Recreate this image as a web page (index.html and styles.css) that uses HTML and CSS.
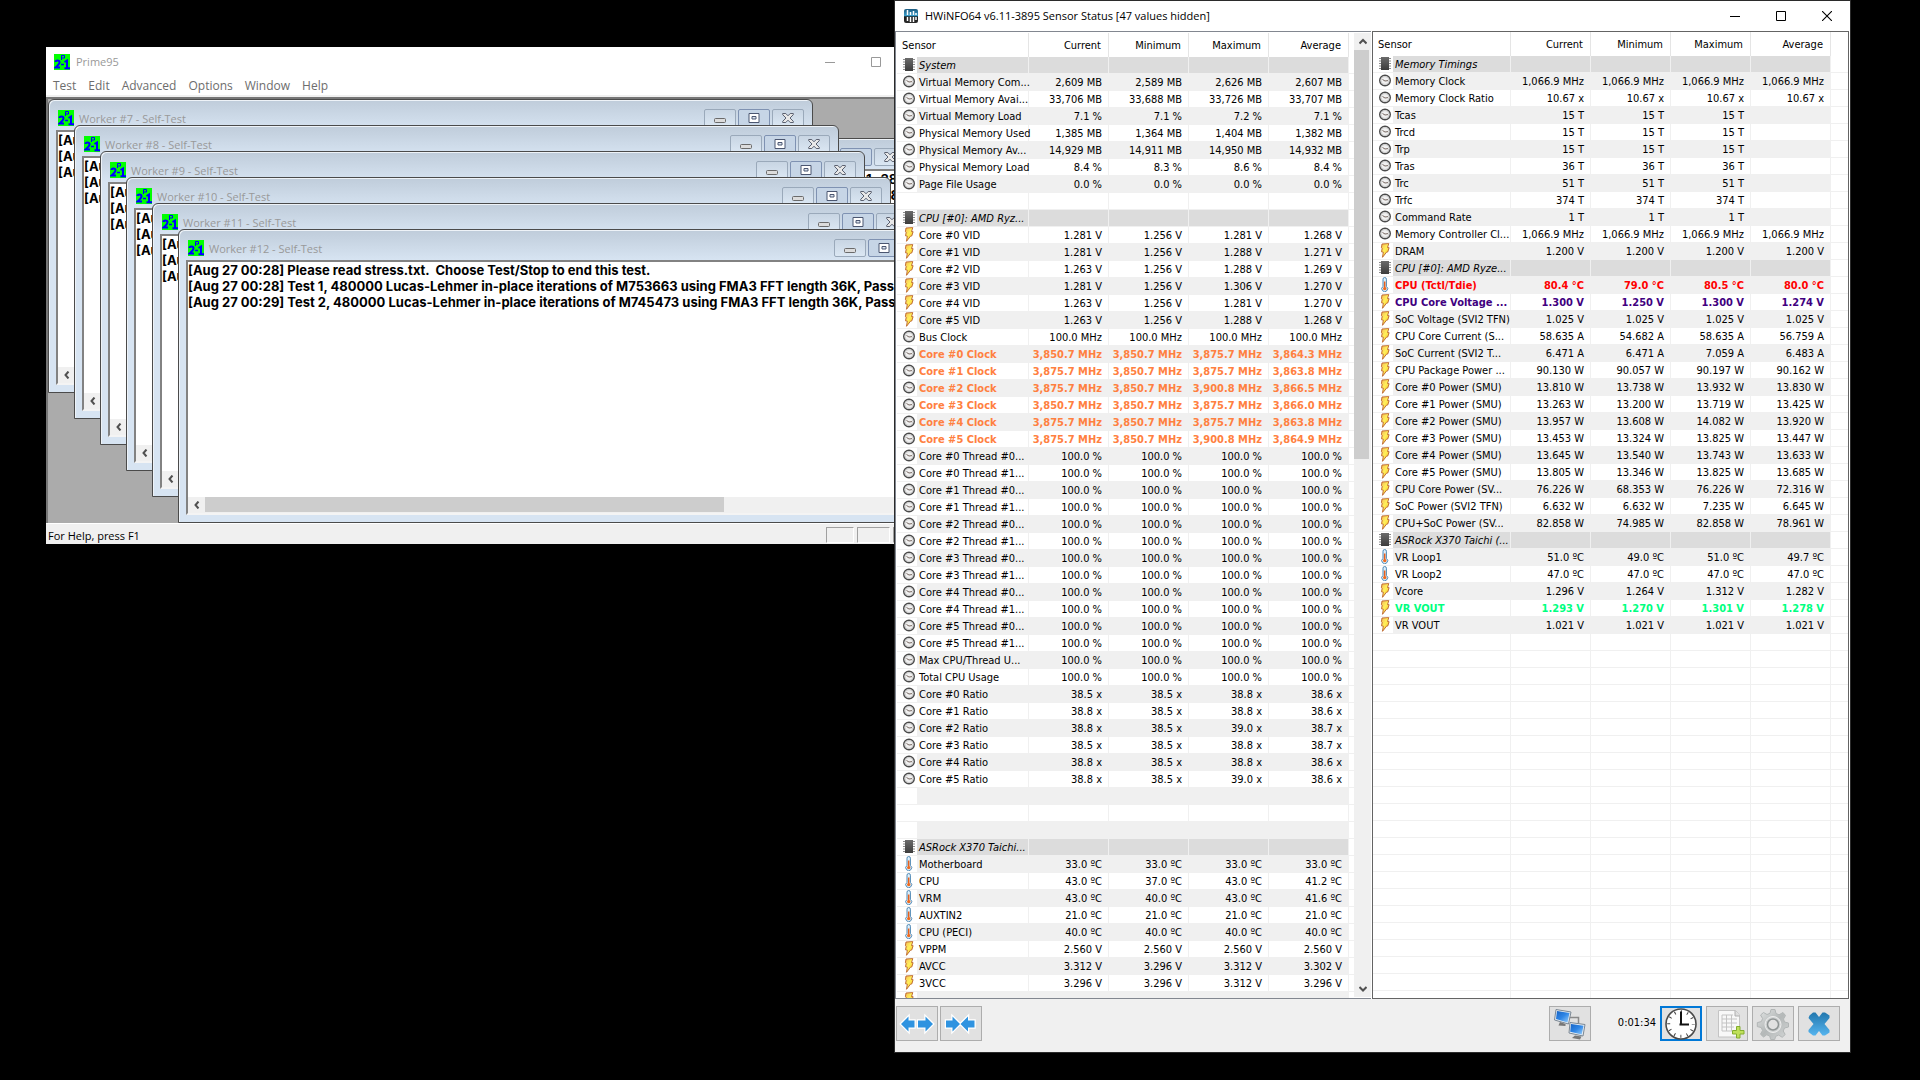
FILE: index.html
```html
<!DOCTYPE html>
<html lang="en">
<head>
<meta charset="utf-8">
<title>Desktop</title>
<link rel="stylesheet" href="styles.css">
</head>
<body>
<svg class="defs" aria-hidden="true">
  <defs>
    <linearGradient id="g-chip" x1="0" y1="0" x2="0" y2="1"><stop offset="0" stop-color="#6b6b6b"/><stop offset="1" stop-color="#3c3c3c"/></linearGradient>
    <linearGradient id="g-bolt" x1="0" y1="0" x2="1" y2="1"><stop offset="0" stop-color="#f6b95a"/><stop offset=".45" stop-color="#fff05a"/><stop offset="1" stop-color="#f3b31c"/></linearGradient>
    <linearGradient id="g-blue" x1="0" y1="0" x2="0" y2="1"><stop offset="0" stop-color="#2277ae"/><stop offset="1" stop-color="#55b4ee"/></linearGradient>
    <linearGradient id="g-screen" x1="0" y1="0" x2="1" y2="1"><stop offset="0" stop-color="#1763c4"/><stop offset=".5" stop-color="#2f86e6"/><stop offset="1" stop-color="#9bd0fa"/></linearGradient>
    <linearGradient id="g-steel" x1="0" y1="0" x2="1" y2="1"><stop offset="0" stop-color="#e4e6e6"/><stop offset=".5" stop-color="#b4b8b8"/><stop offset="1" stop-color="#d5d8d8"/></linearGradient>
    <linearGradient id="g-app" x1="0" y1="0" x2="0" y2="1"><stop offset="0" stop-color="#1d5b80"/><stop offset=".5" stop-color="#3a9fcc"/><stop offset=".55" stop-color="#1c1c1c"/><stop offset="1" stop-color="#2c2c2c"/></linearGradient>
  </defs>
  <symbol id="chip" viewBox="0 0 12 15">
    <path d="M0 2.500h12M0 5h12M0 7.500h12M0 10h12M0 12.500h12" stroke="#8a8a8a"/>
    <rect x="2" y="1" width="8" height="13" fill="url(#g-chip)"/>
  </symbol>
  <symbol id="clock" viewBox="0 0 12 15">
    <circle cx="6" cy="7.500" r="5.300" fill="#f1f1f1" stroke="#4a4a4a" stroke-width="1.400"/>
    <circle cx="6" cy="7.500" r="4" fill="none" stroke="#c4c4c4" stroke-width=".8"/>
    <path d="M3.500 6.500 6 8l3-.4" fill="none" stroke="#6b5a52" stroke-width=".9"/>
  </symbol>
  <symbol id="bolt" viewBox="0 0 12 15">
    <path d="M3 1 9.800.6 8.500 4.500l1.600.2-1.300 4.200-1.300.3L3.500 14.300l.8-5.200-1.800-.3.700-3.500-.8-.6z" fill="url(#g-bolt)" stroke="#b9602a" stroke-width=".9" stroke-linejoin="round"/>
  </symbol>
  <symbol id="therm" viewBox="0 0 12 15">
    <path d="M4 2.200a1.700 1.700 0 0 1 3.400 0v7.200a2.900 2.900 0 1 1-3.400 0z" fill="#dff0fb" stroke="#4f88b5" stroke-width="1"/>
    <path d="M5.700 4.500v7" stroke="#e8601c" stroke-width="1.500"/>
    <circle cx="5.700" cy="11.600" r="1.700" fill="#ef6a1e"/>
  </symbol>
  <symbol id="p95" viewBox="0 0 16 16">
    <path fill="#0f0" d="M0 0h16v16H0z"/>
    <path d="M7.500 6V1.500h3v2.500h-3" fill="none" stroke="#00f" stroke-width="1"/>
    <path d="M1.500 8q0-1.500 2-1.500T5.500 8.200Q5.500 10 1.500 13.500H6" fill="none" stroke="#00f" stroke-width="2"/>
    <path d="M7 10.500h3" stroke="#00f" stroke-width="1.500"/>
    <path d="M10.500 8 13 6.500v7M10.500 14.200H16" fill="none" stroke="#00f" stroke-width="2"/>
  </symbol>
  <symbol id="chev-left" viewBox="0 0 8 8"><path d="M5.500 0.500 2.500 4l3 3.500" fill="none" stroke="#505050" stroke-width="2"/></symbol>
  <symbol id="chev-up" viewBox="0 0 8 8"><path d="m.5 5.500 3.500-3.500 3.500 3.500" fill="none" stroke="#505050" stroke-width="2"/></symbol>
  <symbol id="chev-down" viewBox="0 0 8 8"><path d="m.5 2 3.500 3.500 3.500-3.500" fill="none" stroke="#505050" stroke-width="2"/></symbol>
  <symbol id="win-min" viewBox="0 0 10 10"><path d="M0 5.500h10" stroke="currentColor"/></symbol>
  <symbol id="win-max" viewBox="0 0 10 10"><path d="M.5.5h9v9h-9z" fill="none" stroke="currentColor"/></symbol>
  <symbol id="win-close" viewBox="0 0 10 10"><path d="m0 0 10 10M10 0 0 10" stroke="currentColor" stroke-width="1.100"/></symbol>
  <symbol id="mdi-min" viewBox="0 0 12 10"><rect x=".5" y="5.500" width="11" height="4" rx="1" fill="#dcdcdc" stroke="#6a6a6a"/></symbol>
  <symbol id="mdi-max" viewBox="0 0 12 10"><path d="M1 .5h10v9H1z" fill="#fff" stroke="#4b5670"/><path d="M4 3.500h4v2.500H4z" fill="#dce4ef" stroke="#4b5670"/></symbol>
  <symbol id="mdi-close" viewBox="0 0 12 10"><path d="M.7.5h3.100L6 2.800 8.200.5h3.100v1.200L8 5l3.300 3.300v1.200H8.200L6 7.200 3.800 9.500H.7V8.300L4 5 .7 1.700z" fill="#e8e8e8" stroke="#5a6070"/></symbol>
</svg>

<main class="desktop">
  <section class="window prime" aria-label="Prime95">
    <header class="caption inactive">
      <svg class="app-icon"><use href="#p95"/></svg>
      <h1>Prime95</h1>
      <button aria-label="Minimize"><svg><use href="#win-min"/></svg></button>
      <button aria-label="Maximize"><svg><use href="#win-max"/></svg></button>
      <button aria-label="Close"><svg><use href="#win-close"/></svg></button>
    </header>
    <nav class="menu">
      <button>Test</button><button>Edit</button><button>Advanced</button><button>Options</button><button>Window</button><button>Help</button>
    </nav>
    <div class="mdi" id="mdi"></div>
    <footer class="status"><span class="hint">For Help, press F1</span><span class="cell cell-a"></span><span class="cell cell-b"></span><span class="cell cell-c"></span></footer>
  </section>

  <section class="window hwinfo" aria-label="HWiNFO64 Sensor Status">
    <header class="caption">
      <svg class="app-icon" viewBox="0 0 16 16"><rect x="1" y="1" width="14" height="14" rx="2" fill="url(#g-app)"/><path d="M4.500 2v5M7.500 4v3M10.500 3v4M13 5v2M4.500 9v4M7.500 9v5M10.500 9v5M13 9v3" stroke="#fff" stroke-width="1.500"/></svg>
      <h1>HWiNFO64 v6.11-3895 Sensor Status [47 values hidden]</h1>
      <button aria-label="Minimize"><svg><use href="#win-min"/></svg></button>
      <button aria-label="Maximize"><svg><use href="#win-max"/></svg></button>
      <button aria-label="Close"><svg><use href="#win-close"/></svg></button>
    </header>
    <div class="panes">
      <div class="pane pane-left">
        <table class="sensors">
          <colgroup><col class="c-name"><col class="c-val"><col class="c-val"><col class="c-val"><col class="c-val"><col></colgroup>
          <thead><tr><th>Sensor</th><th>Current</th><th>Minimum</th><th>Maximum</th><th>Average</th><th></th></tr></thead>
          <tbody id="left"></tbody>
        </table>
        <div class="vscroll">
          <button aria-label="Scroll up"><svg><use href="#chev-up"/></svg></button>
          <div class="track"><div class="thumb"></div></div>
          <button aria-label="Scroll down"><svg><use href="#chev-down"/></svg></button>
        </div>
      </div>
      <div class="pane pane-right">
        <table class="sensors">
          <colgroup><col class="c-name"><col class="c-val"><col class="c-val"><col class="c-val"><col class="c-val"><col></colgroup>
          <thead><tr><th>Sensor</th><th>Current</th><th>Minimum</th><th>Maximum</th><th>Average</th><th></th></tr></thead>
          <tbody id="right"></tbody>
        </table>
      </div>
    </div>
    <footer class="tools">
      <div class="pair">
        <button aria-label="Expand columns"><svg viewBox="0 0 36 20"><path d="M2 10 9.500 2.500V6.500H15.500v7H9.500v4zM34 10l-7.500-7.500v4H19v7h7.500v4z" fill="#2f93e0" stroke="#fff" stroke-width="2.500" paint-order="stroke"/></svg></button>
        <button aria-label="Shrink columns"><svg viewBox="0 0 36 20"><path d="M17 10l-7.500-7.500v4H3v7h6.500v4zM17.500 10 25 2.500v4h6.500v7H25v4z" fill="#2f93e0" stroke="#fff" stroke-width="2.500" paint-order="stroke"/></svg></button>
      </div>
      <button aria-label="Remote sensors"><svg viewBox="0 0 36 32"><path d="M15 9.500h11.500V17" fill="none" stroke="#8a8a8a" stroke-width="1.500"/>
        <path d="m4 1.500 15 2.500-2.500 12L2.500 12z" fill="#e8eef4" stroke="#7a8794"/><path d="M5 3l12.500 2-2 9.500L4 11z" fill="url(#g-screen)"/><path d="m8 14-1.500 3.500 7 .5v-2z" fill="#777"/>
        <path d="m18 14.500 15 2-2 11.500-14-3z" fill="#e8eef4" stroke="#7a8794"/><path d="m19 16 12.500 1.800-1.800 8.700-11.500-2.700z" fill="url(#g-screen)"/><path d="M23 27.500 20 30l8 1.500 1.500-3z" fill="#777"/></svg></button>
      <time>0:01:34</time>
      <button class="active" aria-label="Reset timer"><svg viewBox="0 0 36 32"><circle cx="18" cy="16" r="15" fill="#fff" stroke="#4a4a4a" stroke-width="1.600"/><circle cx="18" cy="16" r="12.300" fill="none" stroke="#444" stroke-width="3" stroke-dasharray="1 5.440" stroke-dashoffset=".5"/><path d="M18 16V3.500M16.500 16.500h9.500" stroke="#111" stroke-width="2"/></svg></button>
      <button aria-label="Log to file"><svg viewBox="0 0 36 32"><path d="M9.500 2.500h17l4 4.500v22h-21z" fill="#f8f8f8" stroke="#c4c4c4"/><path d="M26 2.500V8h4.500" fill="#ddd" stroke="#b0b0b0"/><path d="M13 7h11M13 11h15M13 15h15M13 19h12M13 23h10M13 7v16M17.500 7v16M22.500 7v16" fill="none" stroke="#c4c4c4"/><path d="M27.500 18.500h3.500v4h4v3.500h-4v4h-3.500v-4h-4v-3.500h4z" fill="#bfe05a" stroke="#83ad2e"/></svg></button>
      <button aria-label="Settings"><svg viewBox="0 0 36 32"><path d="m16 1.500 4 0 1 4 3 1.300L28 4.500 30.500 7.500 28.500 11l1 3 4 1v4l-4 1-1.300 3 2 3.500-3 2.800-3.500-2.200-3 1.200-1 3.200h-4l-1-3.500-3-1.200L8.500 29l-3-2.800 2-3.600-1.200-3-4-1v-4l4-1 1.300-3-2-3.600L8.500 4.500l3.500 2 3-1.200z" fill="url(#g-steel)" stroke="#b2b6b6"/><circle cx="18" cy="16.500" r="8" fill="#cfd2d2" stroke="#eee"/><circle cx="18" cy="16.500" r="5.500" fill="#e1e1e1" stroke="#8f9494" stroke-width="1.500"/></svg></button>
      <button aria-label="Close sensors"><svg viewBox="0 0 36 32"><path d="m8.500 7.500 3.500-3h2.500L18 9l3.500-4.500H24l4.500 3V10L23.500 16l5 6v2.500l-4.500 3h-2.500L18 23l-3.500 4.500H12l-4.500-3.500v-2l5-6-5-6z" fill="url(#g-blue)"/></svg></button>
    </footer>
  </section>
</main>
<script src="app.js"></script>
</body>
</html>
```
FILE: styles.css
```css
* { box-sizing: border-box; }
body { margin: 0; background: #000; color: #000; font-family: "Open Sans", "Noto Sans", sans-serif; font-size: 11px; }
button { font: inherit; color: inherit; background: none; border: 0; padding: 0; margin: 0; }
svg { display: block; flex: none; }
h1, h2 { margin: 0; flex: 1; font-size: inherit; font-weight: 400; white-space: pre; }
.defs { position: absolute; width: 0; height: 0; }
.desktop { position: relative; height: 100vh; overflow: hidden; }
.window { position: absolute; display: flex; flex-direction: column; background: #fff; }

/* window captions */
.caption { display: flex; align-items: center; height: 30px; flex: none; padding-left: 8px; }
.caption.inactive { color: #999; }
.caption h1 { padding: 0 0 2px 6px; font-size: 11px; }
.app-icon { width: 16px; height: 16px; }
.caption button { width: 46px; height: 30px; display: grid; place-items: center; }
.caption button svg { width: 10px; height: 10px; }

/* Prime95 */
.prime { left: 46px; top: 47px; width: 899px; }
.menu { display: flex; height: 20px; padding-left: 1px; color: #6d6d6d; font-size: 12px; border-bottom: 2px solid #f0f0f0; }
.menu button { padding: 0 6px; line-height: 18px; }
.mdi { position: relative; height: 426px; overflow: hidden; background: #ababab; border-top: 2px solid #777; border-left: 2px solid #777; }
.child { position: absolute; width: 765px; height: 294px; display: flex; flex-direction: column; padding: 0 7px 7px; border: 1px solid #4b4b4b; border-radius: 6px 6px 0 0; background: linear-gradient(#bfccda, #d7e4f2 30px); box-shadow: inset 1px 1px #eef3f8; }
.child-6 { left: 102px; top: 39px; }
.child-7 { left: 0; top: 0; }
.child-8 { left: 26px; top: 26px; }
.child-9 { left: 52px; top: 52px; }
.child-10 { left: 78px; top: 78px; }
.child-11 { left: 104px; top: 104px; }
.child-12 { left: 130px; top: 130px; }
.child header { display: flex; align-items: center; gap: 2px; height: 30px; flex: none; padding: 9px 1px 3px 2px; color: #999; }
.child h2 { padding-left: 3px; }
.child header button { width: 32px; height: 18px; display: grid; place-items: center; border: 1px solid #9aa9ba; border-radius: 2px; background: linear-gradient(#c8d5e3, #dbe7f3); }
.child header button:nth-of-type(2) { border-color: #7f92b2; background: #c6d5e6; }
.child header button svg { width: 12px; height: 10px; }
.log { flex: 1; display: flex; flex-direction: column; overflow: hidden; background: #fff; border: 2px solid; border-color: #828282 #f4f4f4 #f4f4f4 #828282; }
.log pre { flex: 1; margin: 0; font: 700 13px/16px Inter, "Liberation Sans", sans-serif; }
.hscroll { display: flex; height: 16px; background: #f0f0f0; }
.hscroll button { width: 17px; display: grid; place-items: center; }
.hscroll svg { width: 8px; height: 8px; }
.hscroll .track { flex: 1; }
.hscroll .thumb { width: 73%; height: 15px; background: #cdcdcd; }
.chev-right { transform: scaleX(-1); }
.status { display: flex; gap: 3px; height: 21px; padding-left: 2px; background: #f0f0f0; border-top: 1px solid #fff; }
.hint { flex: 1; line-height: 24px; height: 20px; }
.cell { height: 16px; margin-top: 3px; border: 1px solid; border-color: #a0a0a0 #fff #fff #a0a0a0; }
.cell-a { width: 28px; }
.cell-b { width: 33px; }
.cell-c { width: 52px; }

/* HWiNFO */
.hwinfo { left: 895px; right: 70px; top: 1px; bottom: 28px; background: #f0f0f0; box-shadow: 0 0 0 1px #2b2b2b; }
.hwinfo .caption { background: #fff; }
.panes { flex: 1; min-height: 0; display: grid; grid-template-columns: 476fr 477fr; grid-template-rows: 100%; column-gap: 1px; padding-right: 1px; background: #fff; }
.pane { display: flex; overflow: hidden; background: #fff; border: 1px solid #828790; }
.pane-left { padding: 1px 0 1px 1px; border-right: 0; }
.pane-right { border-color: #646464; }
.sensors { flex: 1; align-self: flex-start; table-layout: fixed; width: 0; border-spacing: 0; font: 11px/14px "DejaVu Sans Condensed", "DejaVu Sans", sans-serif; white-space: nowrap; }
.pane-left .c-name { width: 132px; }
.pane-right .c-name { width: 138px; }
.c-val { width: 80px; }
th { height: 24px; padding: 2px 7px 0 0; font-weight: 400; text-align: right; border-right: 1px solid #e5e5e5; }
th:first-child { padding-left: 5px; text-align: left; }
th:last-child, .sensors td:last-child { border-right: 0; }
.sensors td { height: 17px; padding: 2px 6px 0 0; text-align: right; border: solid #f0f0f0; border-width: 0 1px 1px 0; }
.sensors td:first-child { padding: 0; text-align: left; }
.name { display: flex; height: 16px; padding-left: 6px; gap: 4px; }
.name svg { width: 12px; height: 15px; }
.name span { padding-top: 2px; }
.shade td { background: #f0f0f0; }
.shade td:first-child { background: linear-gradient(90deg, #fff 20px, #f0f0f0 20px); }
.group { font-style: italic; }
.group td { background: #dcdcdc; }
.group td:first-child { background: linear-gradient(90deg, #fff 20px, #dcdcdc 20px); }
.sensors td:last-child { background: #fff; }
.orange, .red, .purple, .green { font-weight: 700; }
.orange { color: #ff8040; }
.red { color: #f00; }
.purple { color: #400080; }
.green { color: #00ff80; }

.vscroll { width: 17px; flex: none; display: flex; flex-direction: column; background: #f0f0f0; }
.vscroll button { height: 17px; display: grid; place-items: center; }
.vscroll svg { width: 8px; height: 8px; }
.vscroll .track { flex: 1; }
.vscroll .thumb { width: 15px; height: 44%; background: #cdcdcd; }

.tools { display: flex; gap: 4px; height: 53px; flex: none; padding: 7px 10px 0 1px; }
.tools button { width: 42px; height: 35px; display: grid; place-items: center; background: #e1e1e1; border: 1px solid #adadad; }
.tools button svg { width: 36px; height: 32px; }
.tools .active { border: 2px solid #0078d7; }
.pair { flex: 1; display: flex; gap: 2px; }
.tools time { width: 61px; text-align: right; font: 11px/34px "DejaVu Sans Condensed", "DejaVu Sans", sans-serif; }
```
FILE: app.js
```js
const icon = (id, cls) => `<svg${cls ? ` class="${cls}"` : ''}><use href="#${id}"/></svg>`;

// Log windows, back to front
const tail = ' using FMA3 FFT length 36K, Pass1=384, Pass2=96.';
const log = [
  '[Aug 27 00:28] Please read stress.txt.  Choose Test/Stop to end this test.',
  '[Aug 27 00:28] Test 1, 480000 Lucas-Lehmer in-place iterations of M753663' + tail,
  '[Aug 27 00:29] Test 2, 480000 Lucas-Lehmer in-place iterations of M745473' + tail
];
document.getElementById('mdi').innerHTML = [6, 7, 8, 9, 10, 11, 12].map(n => `
  <section class="child child-${n}">
    <header>${icon('p95', 'app-icon')}<h2>Worker #${n} - Self-Test</h2>
      <button aria-label="Minimize">${icon('mdi-min')}</button><button aria-label="Maximize">${icon('mdi-max')}</button><button aria-label="Close">${icon('mdi-close')}</button>
    </header>
    <div class="log"><pre>${(n === 6 ? [log[1], log[2]] : log).join('\n')}</pre>
      <div class="hscroll"><button aria-label="Scroll left">${icon('chev-left')}</button><div class="track"><div class="thumb"></div></div><button aria-label="Scroll right">${icon('chev-left', 'chev-right')}</button></div>
    </div>
  </section>`).join('');

// Rows: icon key | name | values | unit | colour. A lone "-" is a blank row, "*" starts a group.
const icons = { c: 'clock', b: 'bolt', t: 'therm' };
const left = `*|System
c|Virtual Memory Com...|2,609 2,589 2,626 2,607|MB
c|Virtual Memory Avai...|33,706 33,688 33,726 33,707|MB
c|Virtual Memory Load|7.1 7.1 7.2 7.1|%
c|Physical Memory Used|1,385 1,364 1,404 1,382|MB
c|Physical Memory Av...|14,929 14,911 14,950 14,932|MB
c|Physical Memory Load|8.4 8.3 8.6 8.4|%
c|Page File Usage|0.0 0.0 0.0 0.0|%
-
*|CPU [#0]: AMD Ryz...
b|Core #0 VID|1.281 1.256 1.281 1.268|V
b|Core #1 VID|1.281 1.256 1.288 1.271|V
b|Core #2 VID|1.263 1.256 1.288 1.269|V
b|Core #3 VID|1.281 1.256 1.306 1.270|V
b|Core #4 VID|1.263 1.256 1.281 1.270|V
b|Core #5 VID|1.263 1.256 1.288 1.268|V
c|Bus Clock|100.0 100.0 100.0 100.0|MHz
c|Core #0 Clock|3,850.7 3,850.7 3,875.7 3,864.3|MHz|orange
c|Core #1 Clock|3,875.7 3,850.7 3,875.7 3,863.8|MHz|orange
c|Core #2 Clock|3,875.7 3,850.7 3,900.8 3,866.5|MHz|orange
c|Core #3 Clock|3,850.7 3,850.7 3,875.7 3,866.0|MHz|orange
c|Core #4 Clock|3,875.7 3,850.7 3,875.7 3,863.8|MHz|orange
c|Core #5 Clock|3,875.7 3,850.7 3,900.8 3,864.9|MHz|orange
${[0, 1, 2, 3, 4, 5].flatMap(i => [0, 1].map(j => `c|Core #${i} Thread #${j}...|100.0 100.0 100.0 100.0|%`)).join('\n')}
c|Max CPU/Thread U...|100.0 100.0 100.0 100.0|%
c|Total CPU Usage|100.0 100.0 100.0 100.0|%
c|Core #0 Ratio|38.5 38.5 38.8 38.6|x
c|Core #1 Ratio|38.8 38.5 38.8 38.6|x
c|Core #2 Ratio|38.8 38.5 39.0 38.7|x
c|Core #3 Ratio|38.5 38.5 38.8 38.7|x
c|Core #4 Ratio|38.8 38.5 38.8 38.6|x
c|Core #5 Ratio|38.8 38.5 39.0 38.6|x
-
-
-
*|ASRock X370 Taichi...
t|Motherboard|33.0 33.0 33.0 33.0|ºC
t|CPU|43.0 37.0 43.0 41.2|ºC
t|VRM|43.0 40.0 43.0 41.6|ºC
t|AUXTIN2|21.0 21.0 21.0 21.0|ºC
t|CPU (PECI)|40.0 40.0 40.0 40.0|ºC
b|VPPM|2.560 2.560 2.560 2.560|V
b|AVCC|3.312 3.296 3.312 3.302|V
b|3VCC|3.296 3.296 3.312 3.296|V
b|`;
const right = `*|Memory Timings
c|Memory Clock|1,066.9 1,066.9 1,066.9 1,066.9|MHz
c|Memory Clock Ratio|10.67 10.67 10.67 10.67|x
c|Tcas|15 15 15|T
c|Trcd|15 15 15|T
c|Trp|15 15 15|T
c|Tras|36 36 36|T
c|Trc|51 51 51|T
c|Trfc|374 374 374|T
c|Command Rate|1 1 1|T
c|Memory Controller Cl...|1,066.9 1,066.9 1,066.9 1,066.9|MHz
b|DRAM|1.200 1.200 1.200 1.200|V
*|CPU [#0]: AMD Ryze...
t|CPU (Tctl/Tdie)|80.4 79.0 80.5 80.0|°C|red
b|CPU Core Voltage ...|1.300 1.250 1.300 1.274|V|purple
b|SoC Voltage (SVI2 TFN)|1.025 1.025 1.025 1.025|V
b|CPU Core Current (S...|58.635 54.682 58.635 56.759|A
b|SoC Current (SVI2 T...|6.471 6.471 7.059 6.483|A
b|CPU Package Power ...|90.130 90.057 90.197 90.162|W
b|Core #0 Power (SMU)|13.810 13.738 13.932 13.830|W
b|Core #1 Power (SMU)|13.263 13.200 13.719 13.425|W
b|Core #2 Power (SMU)|13.957 13.608 14.082 13.920|W
b|Core #3 Power (SMU)|13.453 13.324 13.825 13.447|W
b|Core #4 Power (SMU)|13.645 13.540 13.743 13.633|W
b|Core #5 Power (SMU)|13.805 13.346 13.825 13.685|W
b|CPU Core Power (SV...|76.226 68.353 76.226 72.316|W
b|SoC Power (SVI2 TFN)|6.632 6.632 7.235 6.645|W
b|CPU+SoC Power (SV...|82.858 74.985 82.858 78.961|W
*|ASRock X370 Taichi (...
t|VR Loop1|51.0 49.0 51.0 49.7|ºC
t|VR Loop2|47.0 47.0 47.0 47.0|ºC
b|Vcore|1.296 1.264 1.312 1.282|V
b|VR VOUT|1.293 1.270 1.301 1.278|V|green
b|VR VOUT|1.021 1.021 1.021 1.021|V`;

function fill(id, text, total) {
  const rows = text.split('\n').map((line, i) => {
    const [kind, name = '', values = '', unit = '', colour = ''] = line.split('|');
    const v = values ? values.split(' ') : [];
    const cls = kind === '*' ? 'group' : [i % 2 ? 'shade' : '', colour].join(' ').trim();
    const art = kind === '*' ? icon('chip') : icons[kind] ? icon(icons[kind]) : '';
    const cells = [0, 1, 2, 3].map(k => `<td>${v[k] ? v[k] + ' ' + unit : ''}</td>`).join('');
    return `<tr class="${cls}"><td><div class="name">${art}<span>${name}</span></div></td>${cells}<td></td></tr>`;
  });
  while (rows.length < total) rows.push('<tr><td></td><td></td><td></td><td></td><td></td><td></td></tr>');
  document.getElementById(id).innerHTML = rows.join('');
}
fill('left', left, 56);
fill('right', right, 56);
```
